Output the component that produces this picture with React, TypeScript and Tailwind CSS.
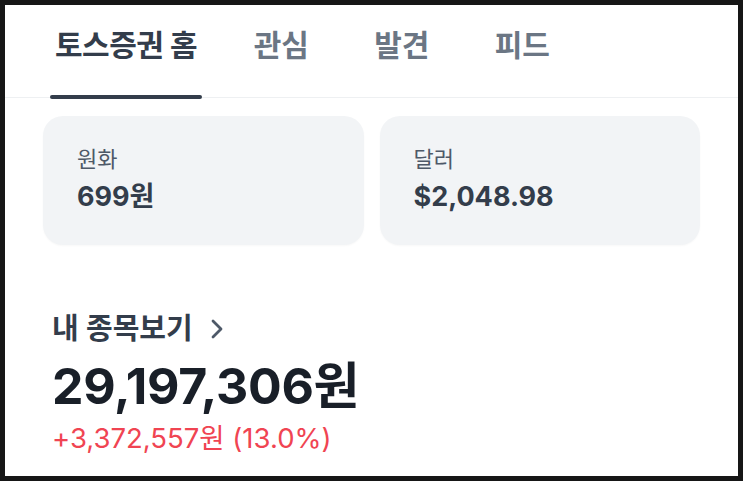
// Écran d'accueil Toss : onglets, soldes et résumé du portefeuille
import React from "react";

const font = { fontFamily: '"Inter", "Noto Sans CJK KR", sans-serif' };

export default function App() {
  const tabs = ["관심", "발견", "피드"];

  return (
    <div className="w-[743px] h-[481px] bg-[#161616] p-[5px]" style={font}>
      <div className="w-full h-full bg-white overflow-hidden">
        {/* onglets du haut */}
        <div className="relative h-[93px] border-b border-[#eef0f2] flex pl-[45px] pt-[22px]">
          <div className="relative w-[152px] h-[36px] text-[30px] leading-[36px] font-bold text-[#333d4b] text-center tracking-[-0.5px]">
            토스증권 홈
            <div className="absolute left-0 right-0 top-[68px] h-[4px] rounded-full bg-[#333d4b]" />
          </div>
          <div className="flex ml-[19px]">
            {tabs.map((t) => (
              <div key={t} className="w-[120.5px] text-center text-[30px] leading-[36px] font-semibold text-[#6b7684]">
                {t}
              </div>
            ))}
          </div>
        </div>

        {/* cartes solde */}
        <div className="flex gap-[16px] px-[38px] mt-[18px]">
          <div className="flex-1 h-[129px] rounded-[20px] bg-[#f2f4f6] pl-[34px] pt-[29px] shadow-[0_1px_2px_rgba(0,0,0,0.03)]">
            <p className="text-[22px] leading-[28px] text-[#4e5968]">원화</p>
            <p className="mt-[7px] text-[27px] leading-[34px] font-bold text-[#333d4b]">699원</p>
          </div>
          <div className="flex-1 h-[129px] rounded-[20px] bg-[#f2f4f6] pl-[34px] pt-[29px] shadow-[0_1px_2px_rgba(0,0,0,0.03)]">
            <p className="text-[22px] leading-[28px] text-[#4e5968]">달러</p>
            <p className="mt-[7px] text-[27px] leading-[34px] font-bold text-[#333d4b]">$2,048.98</p>
          </div>
        </div>

        {/* résumé portefeuille */}
        <div className="px-[47px] mt-[66px]">
          <div className="flex items-center gap-[17px] text-[29px] leading-[36px] font-semibold text-[#333d4b]">
            <span>내 종목보기</span>
            <svg width="14" height="22" viewBox="0 0 14 22" fill="none">
              <path d="M3 3l8 8-8 8" stroke="#4e5968" strokeWidth="2.8" strokeLinecap="round" strokeLinejoin="round" />
            </svg>
          </div>
          <p className="mt-[11px] text-[50px] leading-[56px] font-bold text-[#191f28] tracking-[-0.3px]">29,197,306원</p>
          <p className="mt-[7px] text-[27.5px] leading-[34px] text-[#f04452]">+3,372,557원 (13.0%)</p>
        </div>
      </div>
    </div>
  );
}
